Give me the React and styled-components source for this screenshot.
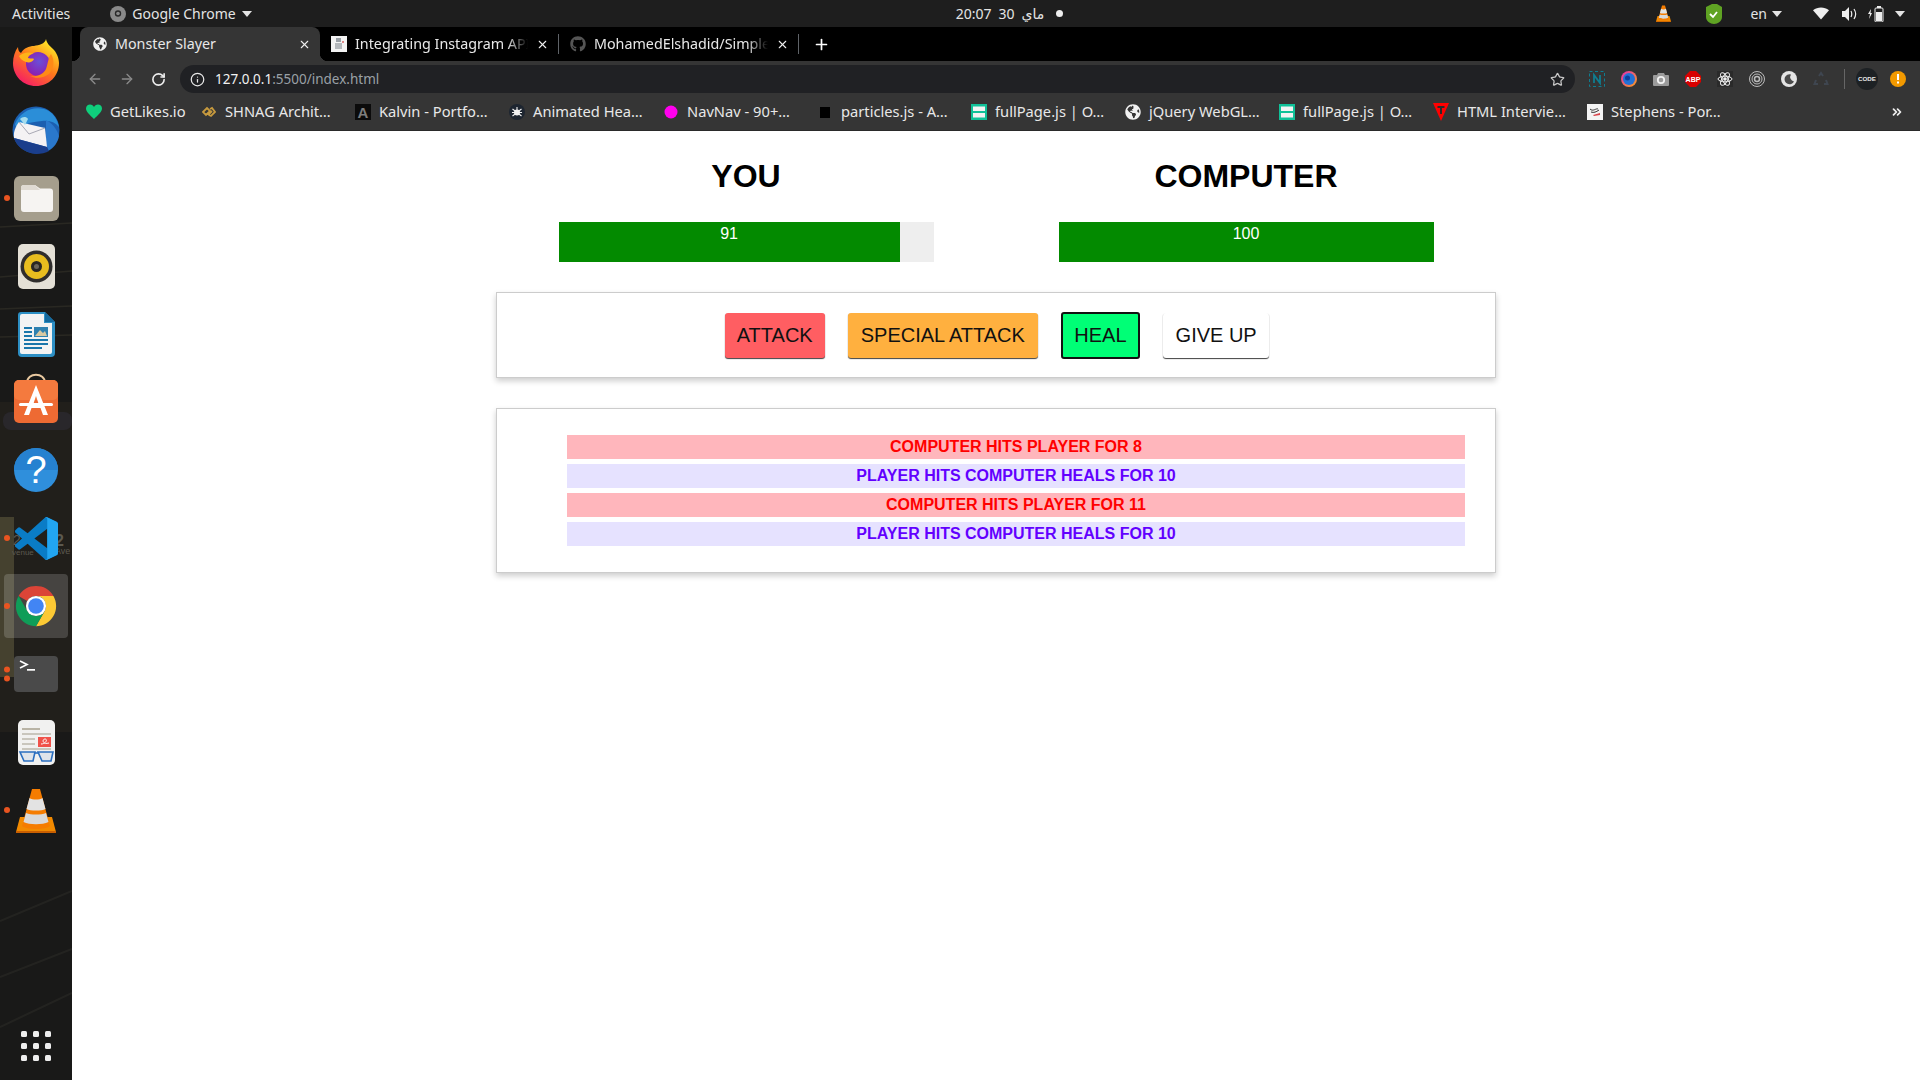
import React from 'react';
import styled, { createGlobalStyle } from 'styled-components';
import { ArrowLeft, ArrowRight, RotateCw, Info, Star, X, Plus, ChevronsRight } from 'lucide-react';
import { FaGithub, FaGlobeAmericas } from 'react-icons/fa';

const uiFont = `"Noto Sans", "DejaVu Sans", sans-serif`;

const GlobalStyle = createGlobalStyle`
  html, body { margin: 0; padding: 0; height: 100%; background: #fff; }
  * { box-sizing: border-box; }
  #root { height: 100%; }
`;

const Screen = styled.div`
  width: 1920px;
  height: 1080px;
  display: flex;
  flex-direction: column;
  overflow: hidden;
  font-family: "Liberation Sans", Arial, sans-serif;
`;

/* ---------- gnome top bar ---------- */
const TopBar = styled.header`
  height: 27px;
  flex: none;
  display: grid;
  grid-template-columns: 1fr auto 1fr;
  align-items: center;
  background: #1e1e1e;
  color: #e4e4e4;
  font-family: ${uiFont};
  font-size: 14px;
  padding: 0 15px 0 12px;
`;
const TopLeft = styled.div`
  display: flex;
  align-items: center;
`;
const AppName = styled.div`
  display: flex;
  align-items: center;
  gap: 6px;
  margin-left: 40px;
`;
const Clock = styled.div`
  display: flex;
  align-items: center;
  gap: 7px;
  padding-left: 102px;
`;
const ClockDot = styled.span`
  width: 7px;
  height: 7px;
  border-radius: 50%;
  background: #eee;
  margin-left: 5px;
`;
const Tray = styled.div`
  display: flex;
  align-items: center;
  justify-content: flex-end;
`;
const TrayItem = styled.div`
  display: flex;
  align-items: center;
  gap: 5px;
  margin-left: ${(p) => p.$gap}px;
`;
const Caret = styled.span`
  width: 0;
  height: 0;
  border-left: 5px solid transparent;
  border-right: 5px solid transparent;
  border-top: 6px solid #e4e4e4;
`;

/* ---------- desktop ---------- */
const Desktop = styled.div`
  flex: 1;
  min-height: 0;
  display: flex;
`;
const Dock = styled.nav`
  width: 72px;
  flex: none;
  position: relative;
  background: #191918;
  display: flex;
  flex-direction: column;
  padding-top: 1px;
  overflow: hidden;
`;
const Wallpaper = styled.svg`
  position: absolute;
  inset: 0;
`;
const DockSlot = styled.div`
  position: relative;
  height: 68px;
  flex: none;
  display: flex;
  align-items: center;
  justify-content: center;
  &::before {
    content: '';
    position: absolute;
    left: 4px;
    right: 4px;
    top: 2px;
    bottom: 2px;
    border-radius: 4px;
    background: ${(p) => (p.$active ? 'rgba(255,255,255,.17)' : 'transparent')};
  }
  svg { position: relative; }
`;
const RunDots = styled.div`
  position: absolute;
  left: 4px;
  top: 50%;
  transform: translateY(-50%);
  display: flex;
  flex-direction: column;
  gap: 3px;
`;
const RunDot = styled.span`
  width: 6px;
  height: 6px;
  border-radius: 50%;
  background: #e95420;
`;
const AppsGrid = styled.div`
  position: relative;
  margin-top: auto;
  margin-bottom: 19px;
  align-self: center;
  display: grid;
  grid-template-columns: repeat(3, 6px);
  gap: 6px;
`;
const AppsDot = styled.span`
  width: 6px;
  height: 6px;
  border-radius: 1.5px;
  background: #eee;
`;
const BagSvg = styled.svg`
  margin-top: -8px;
`;

/* ---------- chrome ---------- */
const Browser = styled.div`
  flex: 1;
  min-width: 0;
  display: flex;
  flex-direction: column;
`;
const TabStrip = styled.div`
  height: 34px;
  flex: none;
  display: flex;
  background: #000;
  padding-left: 8px;
  font-family: ${uiFont};
  font-size: 14.3px;
  color: #e8e8e8;
`;
const Tab = styled.div`
  position: relative;
  width: ${(p) => p.$width}px;
  display: flex;
  align-items: center;
  padding: 0 9px 0 ${(p) => p.$padLeft}px;
  gap: 8px;
  background: ${(p) => (p.$active ? '#353535' : 'transparent')};
  border-radius: 8px 8px 0 0;
  &::before, &::after {
    content: '';
    position: absolute;
    bottom: 0;
    width: 8px;
    height: 8px;
    display: ${(p) => (p.$active ? 'block' : 'none')};
  }
  &::before { left: -8px; background: radial-gradient(circle at 0 0, transparent 8px, #353535 8.5px); }
  &::after { right: -8px; background: radial-gradient(circle at 100% 0, transparent 8px, #353535 8.5px); }
`;
const TabTitle = styled.span`
  flex: 1;
  min-width: 0;
  margin-top: -2px;
  white-space: nowrap;
  ${(p) => p.$fade && `mask-image: linear-gradient(to right, #000 88%, transparent 100%);`}
`;
const TabSep = styled.span`
  width: 1px;
  height: 20px;
  align-self: center;
  background: #5f6368;
  flex: none;
`;
const NewTab = styled.span`
  display: flex;
  align-items: center;
  margin-left: 14px;
`;
const Toolbar = styled.div`
  height: 32px;
  flex: none;
  display: flex;
  align-items: center;
  gap: 16px;
  background: #353535;
  padding: 4px 10px 0 15px;
`;
const Omnibox = styled.div`
  flex: 1;
  min-width: 0;
  height: 28px;
  display: flex;
  align-items: center;
  background: #202124;
  border-radius: 14px;
  padding: 0 10px;
  margin-left: -2px;
  font-family: ${uiFont};
  font-size: 13.5px;
`;
const UrlHost = styled.span`
  color: #f1f1f1;
  margin-left: 10px;
`;
const UrlPath = styled.span`
  color: #9aa0a6;
  flex: 1;
`;
const Extensions = styled.div`
  display: flex;
  align-items: center;
  gap: 8px;
  margin-left: -6px;
`;
const ExtSlot = styled.span`
  width: 24px;
  display: flex;
  justify-content: center;
`;
const ExtSep = styled.span`
  width: 1px;
  height: 20px;
  background: #666;
  margin: 0 3px 0 3px;
`;
const BookmarkBar = styled.div`
  height: 38px;
  flex: none;
  display: flex;
  align-items: center;
  padding-left: 14px;
  background: #353535;
  border-bottom: 1px solid #2a2a2a;
  color: #e8e8e8;
  font-family: ${uiFont};
  font-size: 14.7px;
`;
const Bookmark = styled.div`
  display: flex;
  align-items: center;
  gap: 8px;
  margin-right: ${(p) => p.$after}px;
`;
const BookmarkIcon = styled.span`
  width: 16px;
  display: flex;
  justify-content: center;
`;
const BookmarkLabel = styled.span`
  width: ${(p) => p.$width}px;
  margin-top: -2px;
  white-space: nowrap;
`;
const MoreBookmarks = styled.span`
  display: flex;
  margin-left: auto;
  margin-right: 16px;
`;

/* ---------- the game page ---------- */
const Page = styled.main`
  flex: 1;
  background: #fff;
  padding-top: 27px;
`;
const Game = styled.div`
  width: 1000px;
  margin: 0 auto;
`;
const Players = styled.section`
  display: grid;
  grid-template-columns: 1fr 1fr;
`;
const Player = styled.div`
  text-align: center;
`;
const PlayerName = styled.h1`
  margin: 0;
  font-size: 32px;
  font-weight: 700;
  line-height: 37px;
  color: #000;
`;
const HealthBar = styled.div`
  width: 75%;
  height: 40px;
  margin: 27px auto 0;
  background: #eee;
`;
const HealthFill = styled.div`
  height: 100%;
  background: #038a00;
  color: #fff;
  font-size: 16px;
  line-height: 18px;
  padding-top: 3px;
`;
const Card = styled.section`
  border: 1px solid #ccc;
  box-shadow: 0 3px 6px rgba(0, 0, 0, 0.2);
  background: #fff;
`;
const Controls = styled(Card)`
  margin-top: 30px;
  height: 86px;
  display: flex;
  align-items: center;
  justify-content: center;
  gap: 23px;
  padding-left: 2px;
`;
const ActionButton = styled.button`
  height: ${(p) => (p.$focused ? 47 : 45)}px;
  padding: 0 ${(p) => p.$pad}px;
  font-family: inherit;
  font-size: 20px;
  color: #111;
  background: ${(p) => p.$color};
  border: ${(p) => (p.$focused ? '2px solid #111' : 'none')};
  border-radius: 3px;
  box-shadow: ${(p) => (p.$focused ? 'none' : '0 1px 1px rgba(0, 0, 0, 0.75)')};
`;
const LogCard = styled(Card)`
  margin-top: 30px;
  padding: 26px 30px 26px;
`;
const LogList = styled.ul`
  list-style: none;
  margin: 0;
  padding: 0 0 0 40px;
  display: flex;
  flex-direction: column;
  gap: 5px;
`;
const LogRow = styled.li`
  height: 24px;
  line-height: 23px;
  text-align: center;
  font-size: 16px;
  font-weight: 700;
  color: ${(p) => (p.$who === 'computer' ? '#ff0000' : '#6200ff')};
  background: ${(p) => (p.$who === 'computer' ? '#ffb6bc' : '#e6e2ff')};
`;

/* ---------- drawn icons ---------- */
const Firefox = () => (
  <svg width="46" height="48" viewBox="0 0 46 48">
    <defs>
      <linearGradient id="ffa" x1="0.8" y1="0.1" x2="0.2" y2="1">
        <stop offset="0" stopColor="#ffe226" />
        <stop offset="0.45" stopColor="#ff7a1a" />
        <stop offset="1" stopColor="#f5156c" />
      </linearGradient>
      <radialGradient id="ffb" cx="0.55" cy="0.4" r="0.6">
        <stop offset="0" stopColor="#6a4fd8" />
        <stop offset="1" stopColor="#8c1fb0" />
      </radialGradient>
    </defs>
    <path d="M33 1c1 5 4 7 8 11 4 5 5 10 5 13 0 13-10 23-23 23S0 38 0 25C0 19 2 13 5 9c0 3 1 5 3 6 3-5 8-7 13-7 5-1 11-2 12-7z" fill="url(#ffa)" />
    <circle cx="25" cy="26" r="12" fill="url(#ffb)" />
    <path d="M6 18c4-3 9-5 15-2-4 0-6 2-6 4 3 1 5 0 6 1-1 3-5 4-8 3-3-1-6-3-7-6z" fill="#ffb319" />
    <path d="M38 16c4 6 3 15-2 20-5 4-13 5-19 2 6 1 13-1 16-7 2-5 2-11 5-15z" fill="#ff8a16" />
  </svg>
);
const Thunderbird = () => (
  <svg width="48" height="48" viewBox="0 0 48 48">
    <circle cx="24" cy="24" r="23.500" fill="#1c5fb0" />
    <path d="M3 18C8 6 20 0 32 3c8 2 13 9 15 18-4-5-10-7-17-6-6 1-10 1-13 2L5 24z" fill="#2b8ed8" />
    <path d="M34 14c6 3 11 9 13 16-1 6-5 12-11 15l-2-8z" fill="#2a78cc" />
    <path d="M7 16l26 6 2 19L2 32c-1-6 2-12 5-16z" fill="#f4f2f4" />
    <path d="M7 16l10 12 16-6" fill="none" stroke="#a9a9b5" strokeWidth="1" />
    <path d="M2 32l33 9 2 4c-3 2-8 3-13 3C13 47 5 41 2 32z" fill="#1a3e8c" />
    <path d="M8 13l5 6 3-6c-2-3-6-2-8 0z" fill="#a4dcee" />
  </svg>
);
const Files = () => (
  <svg width="45" height="45" viewBox="0 0 45 45">
    <rect width="45" height="45" rx="6" fill="#a59e8d" />
    <path d="M7 12a3 3 0 0 1 3-3h11l5 3.500h10a3 3 0 0 1 3 3V33a3 3 0 0 1-3 3H10a3 3 0 0 1-3-3z" fill="#f6f4f2" />
    <path d="M7 12a3 3 0 0 1 3-3h11l5 5H7z" fill="#dfdad2" />
  </svg>
);
const Rhythmbox = () => (
  <svg width="37" height="45" viewBox="0 0 37 45">
    <rect width="37" height="45" rx="5" fill="#e4e0d6" />
    <circle cx="18.500" cy="22.500" r="16" fill="#2f2d2c" />
    <circle cx="18.500" cy="22.500" r="12.500" fill="#e8bd1f" />
    <circle cx="18.500" cy="22.500" r="5.500" fill="#2a2723" />
    <circle cx="18.500" cy="22.500" r="2.500" fill="#6b655a" />
  </svg>
);
const Writer = () => (
  <svg width="37" height="45" viewBox="0 0 37 45">
    <path d="M3 0h24l10 10v31a4 4 0 0 1-4 4H4a4 4 0 0 1-4-4V3a3 3 0 0 1 3-3z" fill="#2d8fc4" />
    <path d="M4 2h22v9h8v29a2 2 0 0 1-2 2H4a2 2 0 0 1-2-2V4a2 2 0 0 1 2-2z" fill="#f3f3f3" />
    <path d="M27 0l10 10H27z" fill="#14699d" />
    <rect x="6" y="15" width="8" height="2" fill="#1a76ab" />
    <rect x="6" y="19" width="8" height="2" fill="#1a76ab" />
    <rect x="6" y="23" width="8" height="2" fill="#1a76ab" />
    <rect x="6" y="27" width="24" height="2" fill="#1a76ab" />
    <rect x="6" y="31" width="24" height="2" fill="#1a76ab" />
    <rect x="6" y="35" width="18" height="2" fill="#1a76ab" />
    <rect x="16" y="15" width="14" height="10" fill="#2f81b0" />
    <path d="M17 24l5-6 3 3 2-2 2 5z" fill="#d9c9a3" />
  </svg>
);
const SoftwareBag = () => (
  <BagSvg width="46" height="50" viewBox="0 0 46 50">
    <path d="M14 10c0-11 18-11 18 0" fill="none" stroke="#e9c9a0" strokeWidth="2" />
    <rect x="1" y="7" width="44" height="43" rx="5" fill="#ee6a33" />
    <rect x="1" y="7" width="44" height="20" rx="5" fill="#f47a3e" />
    <path d="M23 12l12 30h-5l-2.500-7h-9L16 42h-5zm0 11l-3 9h6z" fill="#fff" />
    <rect x="6" y="30" width="34" height="3" rx="1.500" fill="#fff" />
  </BagSvg>
);
const HelpIcon = () => (
  <svg width="44" height="44" viewBox="0 0 44 44">
    <circle cx="22" cy="22" r="22" fill="#2f8fdc" />
    <path d="M0 22a22 22 0 0 1 44 0z" fill="#2681d0" />
    <text x="22" y="35" textAnchor="middle" fontSize="38" fontFamily="Liberation Sans" fill="#fff">?</text>
  </svg>
);
const VsCode = () => (
  <svg width="43" height="43" viewBox="0 0 100 100">
    <path d="M96.500 10.800L75.900.9a6.200 6.200 0 0 0-7.100 1.200L29.400 38 12.200 25a4.200 4.200 0 0 0-5.300.2L1.400 30.300a4.200 4.200 0 0 0 0 6.200L16.300 50 1.400 63.500a4.200 4.200 0 0 0 0 6.200l5.500 5a4.200 4.200 0 0 0 5.300.2L29.400 62l39.400 35.900a6.200 6.200 0 0 0 7.100 1.200l20.600-9.900a6.200 6.200 0 0 0 3.500-5.600V16.400a6.200 6.200 0 0 0-3.500-5.600zM75 72.700L45.100 50 75 27.300z" fill="#0a7cc6" />
    <path d="M68.800 2.100a6.200 6.200 0 0 1 7.100-1.200l20.600 9.900a6.200 6.200 0 0 1 3.500 5.600v67.200a6.200 6.200 0 0 1-3.500 5.600l-20.600 9.900a6.200 6.200 0 0 1-7.100-1.200c2.400 2.400 6.200.7 6.200-2.600V4.700c0-3.300-3.800-5-6.200-2.600z" fill="#22a5f1" />
  </svg>
);
const ChromeLogo = ({ size = 44 }) => (
  <svg width={size} height={size} viewBox="0 0 48 48">
    <path d="M5 13a22 22 0 0 1 38 0H24a11 11 0 0 0-9.500 5.500z" fill="#db4437" />
    <path d="M43 13a22 22 0 0 1-19 33l9.500-16.500A11 11 0 0 0 24 13z" fill="#fcc934" />
    <path d="M24 46A22 22 0 0 1 5 13l9.500 16.500a11 11 0 0 0 19 0z" fill="#0f9d58" />
    <circle cx="24" cy="24" r="11" fill="#fff" />
    <circle cx="24" cy="24" r="8.500" fill="#4285f4" />
  </svg>
);
const ChromeGray = () => (
  <svg width="16" height="16" viewBox="0 0 16 16">
    <circle cx="8" cy="8" r="8" fill="#8a8a8a" />
    <circle cx="8" cy="7.500" r="3.200" fill="#2a2a2a" />
    <circle cx="8" cy="7.500" r="1.800" fill="#8a8a8a" />
  </svg>
);
const TerminalIcon = () => (
  <svg width="44" height="36" viewBox="0 0 44 36">
    <rect width="44" height="36" rx="4" fill="#4a4a4a" />
    <path d="M6 5l7 3.500-7 3.500" fill="none" stroke="#fff" strokeWidth="1.700" />
    <rect x="13" y="13" width="8" height="1.700" fill="#fff" />
  </svg>
);
const ReaderIcon = () => (
  <svg width="37" height="45" viewBox="0 0 37 45">
    <rect width="37" height="45" rx="5" fill="#f1f1f0" />
    <rect x="4" y="8" width="18" height="2" fill="#b9b4a6" />
    <rect x="4" y="13" width="29" height="2" fill="#c9c6bd" />
    <rect x="4" y="18" width="13" height="2" fill="#c9c6bd" />
    <rect x="4" y="23" width="13" height="2" fill="#c9c6bd" />
    <rect x="20" y="17" width="13" height="10" fill="#f0524a" />
    <path d="M23 24c5 0 7-5 4-5s-3 6 4 4" fill="none" stroke="#fff" strokeWidth="1" />
    <rect x="4" y="28" width="29" height="2" fill="#c9c6bd" />
    <path d="M2 32h15l-2 9H6zM20 32h15l-2 9h-9z" fill="#dfe4ea" stroke="#2b6fc0" strokeWidth="1.600" />
    <path d="M17 33h3" stroke="#2b6fc0" strokeWidth="1.600" />
  </svg>
);
const VlcCone = ({ width = 40, height = 45 }) => (
  <svg width={width} height={height} viewBox="0 0 40 45">
    <path d="M4 29L0 44a1 1 0 0 0 1 1h38a1 1 0 0 0 1-1l-4-15z" fill="#f28a00" />
    <path d="M0 43h40v2H0z" fill="#c95f00" />
    <path d="M16 1h8l10 37c-4 4-24 4-28 0z" fill="#f57c00" />
    <path d="M13.500 10c3 2 10 2 13 0l3 11c-4 2-15 2-19 0z" fill="#e3e3e3" />
    <path d="M10 25c5 2 15 2 20 0l2.500 9c-6 3-19 3-25 0z" fill="#d9d9d9" />
  </svg>
);
const MiniGlobe = ({ size = 14 }) => <FaGlobeAmericas size={size} color="#f1f1f1" />;
const Heart = () => (
  <svg width="16" height="16" viewBox="0 0 16 16">
    <path d="M8 15C4 11 0 8 0 4.500 0 2 2 .5 4 .5c2 0 3.200 1 4 2.500C8.800 1.500 10 .5 12 .5c2 0 4 1.500 4 4C16 8 12 11 8 15z" fill="#0fcf7c" />
  </svg>
);
const Shnag = () => (
  <svg width="14" height="14" viewBox="0 0 14 14" fill="none" stroke="#c79a3e" strokeWidth="1.800">
    <path d="M1 7l4-4 3 3-4 4zM6 10l4-4M8 4l2-1 3 4-4 4-2-1" />
  </svg>
);
const KalvinIcon = () => (
  <svg width="16" height="16" viewBox="0 0 16 16">
    <rect width="16" height="16" fill="#0b0b0b" />
    <text x="8" y="14" textAnchor="middle" fontSize="15" fontWeight="700" fontFamily="Liberation Sans" fill="#7d7d7d">A</text>
  </svg>
);
const BugIcon = () => (
  <svg width="16" height="16" viewBox="0 0 16 16">
    <circle cx="8" cy="8" r="8" fill="#1d2530" />
    <circle cx="8" cy="8.500" r="3" fill="#f1f1f1" />
    <path d="M3.500 5l9 7M12.500 5l-9 7M3 8.500h10M8 3v3" stroke="#f1f1f1" strokeWidth="1.100" />
  </svg>
);
const MagentaDot = () => (
  <svg width="14" height="14" viewBox="0 0 14 14"><circle cx="7" cy="7" r="6.500" fill="#ff00ee" /></svg>
);
const BlackSquare = () => (
  <svg width="16" height="16" viewBox="0 0 16 16"><rect x="3" y="3" width="10" height="11" fill="#000" /></svg>
);
const FullPageIcon = () => (
  <svg width="16" height="16" viewBox="0 0 16 16">
    <rect width="16" height="16" fill="#10c198" />
    <rect x="2" y="2.500" width="12" height="4.500" fill="#f3f3f3" />
    <rect x="2" y="9" width="12" height="4.500" fill="#f3f3f3" />
  </svg>
);
const RedT = () => (
  <svg width="16" height="18" viewBox="0 0 16 18">
    <path d="M0 0h16L8 18z" fill="#f00" />
    <path d="M4.500 3h7v2H9v6H7V5H4.500z" fill="#2a2a2a" />
  </svg>
);
const StephensIcon = () => (
  <svg width="16" height="16" viewBox="0 0 16 16">
    <rect width="16" height="16" fill="#f4f4f4" />
    <path d="M3 5c3 3 6-1 8 0M4 8c3 1 5 0 8-2" stroke="#333" strokeWidth="1" fill="none" />
    <path d="M6 11l7-2v2l-6 1z" fill="#d8434a" />
  </svg>
);
const InstaFavicon = () => (
  <svg width="16" height="16" viewBox="0 0 16 16">
    <rect width="16" height="16" fill="#f3f3f3" />
    <rect x="5" y="2" width="5" height="4" fill="#9aa0a6" />
    <rect x="4" y="7" width="7" height="6" fill="#b4b8bc" />
    <rect x="11" y="5" width="2" height="2" fill="#d88" />
  </svg>
);
const TrayShield = () => (
  <svg width="17" height="20" viewBox="0 0 17 20">
    <path d="M1 3l6-3h5l5 3v10c0 4-4 7-8 7s-8-3-8-7z" fill="#5fa323" />
    <path d="M5 10l3 3 4-5" fill="none" stroke="#fff" strokeWidth="1.800" />
  </svg>
);
const TrayWifi = () => (
  <svg width="16" height="13" viewBox="0 0 17 13"><path d="M0 3c5-4 12-4 17 0l-8.500 10z" fill="#eee" /></svg>
);
const TraySound = () => (
  <svg width="15" height="14" viewBox="0 0 15 14">
    <path d="M0 4h3l4-4v14l-4-4H0z" fill="#eee" />
    <path d="M9 4c1 2 1 4 0 6M12 2c2 3 2 7 0 10" fill="none" stroke="#eee" strokeWidth="1.200" />
  </svg>
);
const TrayBattery = () => (
  <svg width="16" height="16" viewBox="0 0 16 16">
    <path d="M3 3L0 8h2l-1 5 3-6H2.500z" fill="#eee" />
    <rect x="7" y="2" width="8" height="14" rx="1" fill="none" stroke="#eee" />
    <rect x="9" y="0" width="4" height="2" fill="#eee" />
    <rect x="8" y="6" width="6" height="9" fill="#eee" />
  </svg>
);
const NotionExt = () => (
  <svg width="16" height="16" viewBox="0 0 16 16">
    <rect x=".5" y=".5" width="15" height="15" fill="none" stroke="#0f7d90" strokeDasharray="3 2.500" />
    <path d="M5 12V4l6 8V4" fill="none" stroke="#0f7d90" strokeWidth="1.800" />
  </svg>
);
const OrbExt = () => (
  <svg width="16" height="16" viewBox="0 0 16 16">
    <defs>
      <linearGradient id="orb" x1="0" y1="0" x2="1" y2="1">
        <stop offset="0" stopColor="#e22bb5" />
        <stop offset="1" stopColor="#f7a21c" />
      </linearGradient>
    </defs>
    <circle cx="8" cy="8" r="8" fill="url(#orb)" />
    <circle cx="8" cy="8" r="6" fill="#2371d6" />
    <circle cx="6.500" cy="7" r="2.500" fill="#0d3f9c" />
  </svg>
);
const CameraExt = () => (
  <svg width="16" height="16" viewBox="0 0 16 16">
    <path d="M1 4h3l1-2h6l1 2h3a1 1 0 0 1 1 1v9a1 1 0 0 1-1 1H1a1 1 0 0 1-1-1V5a1 1 0 0 1 1-1z" fill="#9b9b9b" />
    <circle cx="8" cy="9" r="3.200" fill="none" stroke="#f1f1f1" strokeWidth="1.800" />
  </svg>
);
const AbpExt = () => (
  <svg width="16" height="16" viewBox="0 0 16 16">
    <path d="M5 0h6l5 5v6l-5 5H5l-5-5V5z" fill="#d80000" />
    <text x="8" y="10.800" textAnchor="middle" fontSize="7" fontWeight="700" fontFamily="Liberation Sans" fill="#fff">ABP</text>
  </svg>
);
const AtomExt = () => (
  <svg width="16" height="16" viewBox="0 0 16 16" fill="none" stroke="#eee" strokeWidth="1">
    <rect width="16" height="16" fill="#2a2a2a" stroke="none" />
    <ellipse cx="8" cy="8" rx="7" ry="2.800" />
    <ellipse cx="8" cy="8" rx="7" ry="2.800" transform="rotate(60 8 8)" />
    <ellipse cx="8" cy="8" rx="7" ry="2.800" transform="rotate(120 8 8)" />
    <circle cx="8" cy="8" r="1.300" fill="#eee" />
  </svg>
);
const RingsExt = () => (
  <svg width="16" height="16" viewBox="0 0 16 16" fill="none" stroke="#bcbcbc" strokeWidth="1">
    <circle cx="8" cy="8" r="7.500" />
    <circle cx="8" cy="8" r="5" />
    <circle cx="8" cy="8" r="2.500" strokeWidth="1.500" />
  </svg>
);
const MoonExt = () => (
  <svg width="16" height="16" viewBox="0 0 16 16">
    <circle cx="8" cy="8" r="8" fill="#e4e4e4" />
    <path d="M10 3.500a5 5 0 1 0 3 7 4.500 4.500 0 0 1-3-7z" fill="#4a4a4a" />
  </svg>
);
const RecycleExt = () => (
  <svg width="16" height="16" viewBox="0 0 16 16" fill="none" stroke="#3f4650" strokeWidth="2">
    <path d="M6 5l2-3 2 3M13 9l1.500 4H11M5 13H1.500L3 9" />
  </svg>
);
const CodeExt = () => (
  <svg width="22" height="22" viewBox="0 0 22 22">
    <circle cx="11" cy="11" r="11" fill="#1d2124" />
    <text x="11" y="13.300" textAnchor="middle" fontSize="6.200" fontWeight="700" fontFamily="Liberation Sans" fill="#e8e8e8">CODE</text>
  </svg>
);
const AlertExt = () => (
  <svg width="16" height="16" viewBox="0 0 16 16">
    <circle cx="8" cy="8" r="8" fill="#f29900" />
    <rect x="7" y="3" width="2" height="6" fill="#fff" />
    <rect x="7" y="10.500" width="2" height="2" fill="#fff" />
  </svg>
);

const dockApps = [
  { id: 'firefox', icon: <Firefox /> },
  { id: 'thunderbird', icon: <Thunderbird /> },
  { id: 'files', icon: <Files />, dots: 1 },
  { id: 'rhythmbox', icon: <Rhythmbox /> },
  { id: 'writer', icon: <Writer /> },
  { id: 'software', icon: <SoftwareBag /> },
  { id: 'help', icon: <HelpIcon /> },
  { id: 'code', icon: <VsCode />, dots: 1 },
  { id: 'chrome', icon: <ChromeLogo />, dots: 1, active: true },
  { id: 'terminal', icon: <TerminalIcon />, dots: 2 },
  { id: 'reader', icon: <ReaderIcon /> },
  { id: 'vlc', icon: <VlcCone />, dots: 1 },
];

const bookmarks = [
  { id: 'getlikes', label: 'GetLikes.io', icon: <Heart />, width: 75, after: 16 },
  { id: 'shnag', label: 'SHNAG Archit…', icon: <Shnag /> },
  { id: 'kalvin', label: 'Kalvin - Portfo…', icon: <KalvinIcon /> },
  { id: 'animated', label: 'Animated Hea…', icon: <BugIcon /> },
  { id: 'navnav', label: 'NavNav - 90+…', icon: <MagentaDot /> },
  { id: 'particles', label: 'particles.js - A…', icon: <BlackSquare /> },
  { id: 'fullpage1', label: 'fullPage.js | O…', icon: <FullPageIcon /> },
  { id: 'jquery', label: 'jQuery WebGL…', icon: <MiniGlobe size={16} /> },
  { id: 'fullpage2', label: 'fullPage.js | O…', icon: <FullPageIcon /> },
  { id: 'html', label: 'HTML Intervie…', icon: <RedT /> },
  { id: 'stephens', label: 'Stephens - Por…', icon: <StephensIcon /> },
];

const extensions = [<NotionExt />, <OrbExt />, <CameraExt />, <AbpExt />, <AtomExt />, <RingsExt />, <MoonExt />, <RecycleExt />];

const actions = [
  { label: 'ATTACK', color: '#ff5e62', pad: 12 },
  { label: 'SPECIAL ATTACK', color: '#ffb03f', pad: 13 },
  { label: 'HEAL', color: '#00ff76', pad: 11.5, focused: true },
  { label: 'GIVE UP', color: '#fff', pad: 12.5 },
];

const logs = [
  { who: 'computer', text: 'COMPUTER HITS PLAYER FOR 8' },
  { who: 'player', text: 'PLAYER HITS COMPUTER HEALS FOR 10' },
  { who: 'computer', text: 'COMPUTER HITS PLAYER FOR 11' },
  { who: 'player', text: 'PLAYER HITS COMPUTER HEALS FOR 10' },
];

const players = [
  { name: 'YOU', health: 91 },
  { name: 'COMPUTER', health: 100 },
];

function App() {
  return (
    <Screen>
      <GlobalStyle />
      <TopBar>
        <TopLeft>
          <span>Activities</span>
          <AppName>
            <ChromeGray />
            <span>Google Chrome</span>
            <Caret />
          </AppName>
        </TopLeft>
        <Clock>
          <span>20:07</span>
          <span>30</span>
          <span>ماي</span>
          <ClockDot />
        </Clock>
        <Tray>
          <TrayItem $gap={0}><VlcCone width={15} height={17} /></TrayItem>
          <TrayItem $gap={34}><TrayShield /></TrayItem>
          <TrayItem $gap={28}>en<Caret /></TrayItem>
          <TrayItem $gap={31}><TrayWifi /></TrayItem>
          <TrayItem $gap={13}><TraySound /></TrayItem>
          <TrayItem $gap={11}><TrayBattery /></TrayItem>
          <TrayItem $gap={11}><Caret /></TrayItem>
        </Tray>
      </TopBar>
      <Desktop>
        <Dock>
          <Wallpaper width="72" height="1053" viewBox="0 0 72 1053">
            <path d="M0 200l72-4M0 250l72-6M0 282l72-3M0 310l72-2" stroke="#3a372c" strokeWidth="1.500" opacity=".5" />
            <rect x="0" y="375" width="72" height="330" fill="#211f1b" />
            <rect x="3" y="385" width="69" height="18" rx="8" fill="#343040" opacity=".45" />
            <rect x="0" y="490" width="14" height="160" fill="#45412f" />
            <text x="13" y="518" fontSize="14" fill="#5c594f" fontFamily="Liberation Sans">2</text>
            <text x="12" y="528" fontSize="8" fill="#5c594f" fontFamily="Liberation Sans">venue</text>
            <text x="55" y="519" fontSize="16" fontWeight="700" fill="#5c594f" fontFamily="Liberation Sans">2</text>
            <text x="55" y="527" fontSize="9" fill="#5c594f" fontFamily="Liberation Sans">Ave</text>
            <path d="M0 894l72-30M0 950l72-28M0 1000l72-34" stroke="#34332e" strokeWidth="2" opacity=".4" />
          </Wallpaper>
          {dockApps.map((app) => (
            <DockSlot key={app.id} $active={app.active}>
              {app.dots && (
                <RunDots>
                  {Array.from({ length: app.dots }).map((_, i) => <RunDot key={i} />)}
                </RunDots>
              )}
              {app.icon}
            </DockSlot>
          ))}
          <AppsGrid>
            {Array.from({ length: 9 }).map((_, i) => <AppsDot key={i} />)}
          </AppsGrid>
        </Dock>
        <Browser>
          <TabStrip>
            <Tab $active $width={240} $padLeft={13}>
              <MiniGlobe />
              <TabTitle>Monster Slayer</TabTitle>
              <X size={13} color="#eee" />
            </Tab>
            <Tab $width={238} $padLeft={11}>
              <InstaFavicon />
              <TabTitle $fade>Integrating Instagram API</TabTitle>
              <X size={13} color="#eee" />
            </Tab>
            <TabSep />
            <Tab $width={239} $padLeft={11}>
              <FaGithub size={16} color="#555" />
              <TabTitle $fade>MohamedElshadid/Simple</TabTitle>
              <X size={13} color="#eee" />
            </Tab>
            <TabSep />
            <NewTab><Plus size={17} color="#fff" strokeWidth={2.400} /></NewTab>
          </TabStrip>
          <Toolbar>
            <ArrowLeft size={16} color="#8a8a8a" />
            <ArrowRight size={16} color="#8a8a8a" />
            <RotateCw size={15} color="#eee" strokeWidth={2.600} />
            <Omnibox>
              <Info size={15} color="#e8e8e8" />
              <UrlHost>127.0.0.1</UrlHost>
              <UrlPath>:5500/index.html</UrlPath>
              <Star size={15} color="#c8c8c8" />
            </Omnibox>
            <Extensions>
              {extensions.map((ext, i) => <ExtSlot key={i}>{ext}</ExtSlot>)}
              <ExtSep />
              <CodeExt />
              <ExtSlot><AlertExt /></ExtSlot>
            </Extensions>
          </Toolbar>
          <BookmarkBar>
            {bookmarks.map((b) => (
              <Bookmark key={b.id} $after={b.after ?? 18}>
                <BookmarkIcon>{b.icon}</BookmarkIcon>
                <BookmarkLabel $width={b.width ?? 112}>{b.label}</BookmarkLabel>
              </Bookmark>
            ))}
            <MoreBookmarks><ChevronsRight size={14} color="#eee" strokeWidth={3} /></MoreBookmarks>
          </BookmarkBar>
          <Page>
            <Game>
              <Players>
                {players.map((p) => (
                  <Player key={p.name}>
                    <PlayerName>{p.name}</PlayerName>
                    <HealthBar>
                      <HealthFill style={{ width: `${p.health}%` }}>{p.health}</HealthFill>
                    </HealthBar>
                  </Player>
                ))}
              </Players>
              <Controls>
                {actions.map((a) => (
                  <ActionButton key={a.label} $color={a.color} $pad={a.pad} $focused={a.focused}>{a.label}</ActionButton>
                ))}
              </Controls>
              <LogCard>
                <LogList>
                  {logs.map((l, i) => (
                    <LogRow key={i} $who={l.who}>{l.text}</LogRow>
                  ))}
                </LogList>
              </LogCard>
            </Game>
          </Page>
        </Browser>
      </Desktop>
    </Screen>
  );
}

export default App;
